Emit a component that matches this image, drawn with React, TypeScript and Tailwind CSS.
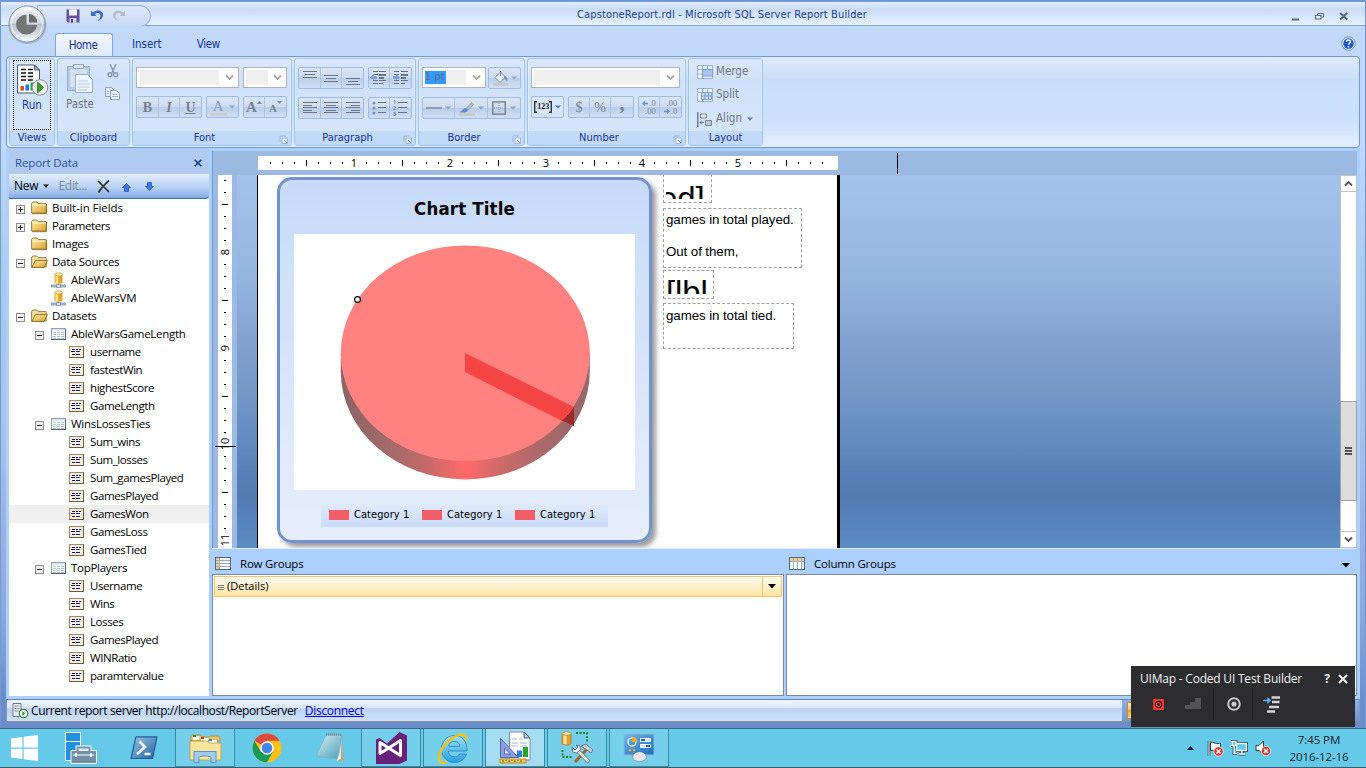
import React from "react";

const tahoma = "font-['DejaVu_Sans_Condensed','DejaVu_Sans',sans-serif] [font-stretch:condensed]";
const segoe = "font-['Open_Sans','Noto_Sans',sans-serif]";

function Caret({ c = "#8ba7d0" }: { c?: string }) {
  return (
    <svg width="6" height="4" viewBox="0 0 6 4" className="shrink-0">
      <path d="M0 0.5h6L3 3.8z" fill={c} />
    </svg>
  );
}

function Chevron({ up = false, c = "#a9a9a9" }: { up?: boolean; c?: string }) {
  return (
    <svg width="9" height="7" viewBox="0 0 9 7" className="shrink-0">
      <path d={up ? "M1 5.5 4.5 2 8 5.5" : "M1 1.5 4.5 5 8 1.5"} fill="none" stroke={c} strokeWidth="1.9" />
    </svg>
  );
}

function Combo({ w, field, children }: { w: string; field: string; children?: React.ReactNode }) {
  return (
    <div className={`flex h-[21px] items-center justify-between border border-[#aeb4bf] bg-white pl-[2px] pr-[4px] ${w}`}>
      <div className={`flex h-[15px] items-center bg-[#efefef] ${field}`}>{children}</div>
      <Chevron />
    </div>
  );
}

function Btns({ children, plain = false }: { children: React.ReactNode; plain?: boolean }) {
  return (
    <div
      className={`flex h-[22px] divide-x divide-[#a9c2e6] rounded-[2px] border border-[#9dbbe6] ${
        plain
          ? "bg-linear-to-b from-[#dbe9fb] to-[#d3e4fb]"
          : "bg-[linear-gradient(180deg,#dae6f5_0%,#cddcf0_48%,#b9cde8_50%,#cfe0f5_100%)]"
      }`}
    >
      {children}
    </div>
  );
}

function B({ w = "w-[22px]", children }: { w?: string; children: React.ReactNode }) {
  return <div className={`flex items-center justify-center ${w}`}>{children}</div>;
}

function Group({ w, label, launcher, children }: { w: string; label: string; launcher?: boolean; children: React.ReactNode }) {
  return (
    <div className={`flex h-[88px] shrink-0 flex-col rounded-[3px] border border-[#9cc0f0] bg-[linear-gradient(180deg,#dbe8fb_0%,#cfe1fa_25%,#d6e7fc_100%)] shadow-[inset_0_0_0_1px_#e0edfd] ${w}`}>
      <div className="h-[72px]">{children}</div>
      <div className={`flex h-[14px] items-center justify-center bg-[#c2d9f8] text-[11px] text-[#15349b] ${tahoma}`}>
        <span className="flex-1 pt-px text-center">{label}</span>
        {launcher && (
          <svg width="9" height="9" viewBox="0 0 9 9" className="mt-[3px] mr-[3px] ml-[3px]">
            <path d="M1 7V1h6" fill="none" stroke="#9db9df" />
            <path d="M3 3h5.5v5.5H3z" fill="#eef5ff" stroke="#9db9df" />
            <path d="M5 5l3 3" stroke="#7d9bc8" />
          </svg>
        )}
      </div>
    </div>
  );
}

function Lines({ rows }: { rows: number[][] }) {
  return (
    <svg width="16" height="16" viewBox="0 0 16 16" shapeRendering="crispEdges">
      {rows.map(([y, x, w]) => (
        <rect key={y} x={x} y={y} width={w} height="1" fill="#6c7684" />
      ))}
    </svg>
  );
}

function Indent({ right = false }: { right?: boolean }) {
  return (
    <svg width="18" height="16" viewBox="0 0 18 16" shapeRendering="crispEdges">
      <g fill="#69727f">
        {[1, 4, 10, 13].map((y) => (
          <rect key={y} x={right ? 2 : 3} y={y} width="5" height="1" />
        ))}
        <rect x="9" y="1" width="7" height="1" />
        <rect x="9" y="4" width="7" height="2" />
        <rect x="9" y="7" width="5" height="2" />
        <rect x="9" y="10" width="7" height="1" />
        <rect x="9" y="13" width="4" height="1" />
      </g>
      <path d={right ? "M1 6h3V4l4 3.5-4 3V9H1z" : "M7 6H4V4L0 7.5l4 3V9h3z"} fill="#7fa0d6" />
    </svg>
  );
}

function FolderIcon({ open = false }: { open?: boolean }) {
  return (
    <svg width="17" height="14" viewBox="0 0 17 14">
      <defs>
        <linearGradient id="fold" x1="0" y1="0" x2="1" y2="1">
          <stop offset="0" stopColor="#fdf0b0" />
          <stop offset="1" stopColor="#dca22c" />
        </linearGradient>
      </defs>
      <path d="M.6 12V2.4L1.8 1h4l1.4 1.6h8V12z" fill={open ? "#f4e09a" : "url(#fold)"} stroke="#8a7440" strokeWidth=".9" />
      {open ? (
        <path d="M.8 12.4 4.4 5.4H16.4L13.2 12.4z" fill="url(#fold)" stroke="#8a6a20" strokeWidth=".9" />
      ) : (
        <>
          <path d="M1.2 4h13.5" stroke="#fff6cf" />
          <path d="M1 12.7h14.5V3" fill="none" stroke="#8d6a1a" strokeWidth=".9" />
        </>
      )}
    </svg>
  );
}

function DbIcon() {
  return (
    <svg width="16" height="16" viewBox="0 0 16 16">
      <path d="M3.5 2.5v8c0 1.6 8 1.6 8 0v-8z" fill="#e4a526" />
      <path d="M4.6 3v8c.8.5 1.6.6 2.6.6V3z" fill="#fbe08a" />
      <ellipse cx="7.5" cy="2.4" rx="4" ry="1.6" fill="#fbe9ae" stroke="#c58d20" strokeWidth=".6" />
      <path d="M7.5 11.8v2" stroke="#55718f" />
      <rect x=".5" y="13" width="5" height="2" fill="#b9cadb" stroke="#63809e" strokeWidth=".7" />
      <rect x="9.5" y="13" width="5" height="2" fill="#b9cadb" stroke="#63809e" strokeWidth=".7" />
      <rect x="5.5" y="12.7" width="4" height="2.6" fill="#dbe6f0" stroke="#63809e" strokeWidth=".7" />
    </svg>
  );
}

function TableIcon() {
  return (
    <svg width="15" height="13" viewBox="0 0 15 13" shapeRendering="crispEdges">
      <rect x=".5" y=".5" width="14" height="11" fill="#f8fbff" stroke="#8c9bb0" />
      <rect x="1" y="1" width="13" height="2" fill="#dfe8f3" />
      {[4, 6, 8, 10].map((y) => (
        <path key={y} d={`M2 ${y}.5h3M6 ${y}.5h3M10 ${y}.5h3`} stroke="#b9c5d3" />
      ))}
      <path d="M0 11.5h15M14.5 1v11" stroke="#4b6182" />
    </svg>
  );
}

function FieldIcon() {
  return (
    <svg width="15" height="12" viewBox="0 0 15 12" shapeRendering="crispEdges">
      <rect x=".5" y=".5" width="14" height="11" fill="#f5f0dd" stroke="#a08c5c" />
      <path d="M0 11.5h15M14.5 0v12" stroke="#6d5a38" />
      <path d="M3 3.5h3M7 3.5h2M10 3.5h2M2 5.5h4M7 5.5h4M3 8.5h3M7 8.5h4" stroke="#17178a" />
    </svg>
  );
}

type Node = { t: string; l: number; k: "f" | "o" | "db" | "tb" | "fd"; e?: "+" | "-" };
const nodes: Node[] = [
  { t: "Built-in Fields", l: 0, k: "f", e: "+" },
  { t: "Parameters", l: 0, k: "f", e: "+" },
  { t: "Images", l: 0, k: "f" },
  { t: "Data Sources", l: 0, k: "o", e: "-" },
  { t: "AbleWars", l: 1, k: "db" },
  { t: "AbleWarsVM", l: 1, k: "db" },
  { t: "Datasets", l: 0, k: "o", e: "-" },
  { t: "AbleWarsGameLength", l: 1, k: "tb", e: "-" },
  { t: "username", l: 2, k: "fd" },
  { t: "fastestWin", l: 2, k: "fd" },
  { t: "highestScore", l: 2, k: "fd" },
  { t: "GameLength", l: 2, k: "fd" },
  { t: "WinsLossesTies", l: 1, k: "tb", e: "-" },
  { t: "Sum_wins", l: 2, k: "fd" },
  { t: "Sum_losses", l: 2, k: "fd" },
  { t: "Sum_gamesPlayed", l: 2, k: "fd" },
  { t: "GamesPlayed", l: 2, k: "fd" },
  { t: "GamesWon", l: 2, k: "fd" },
  { t: "GamesLoss", l: 2, k: "fd" },
  { t: "GamesTied", l: 2, k: "fd" },
  { t: "TopPlayers", l: 1, k: "tb", e: "-" },
  { t: "Username", l: 2, k: "fd" },
  { t: "Wins", l: 2, k: "fd" },
  { t: "Losses", l: 2, k: "fd" },
  { t: "GamesPlayed", l: 2, k: "fd" },
  { t: "WINRatio", l: 2, k: "fd" },
  { t: "paramtervalue", l: 2, k: "fd" },
];
const pads = ["pl-[7px]", "pl-[26px]", "pl-[45px]"];

function TreeRow({ n }: { n: Node }) {
  const tight = n.t === "Built-in Fields" ? "tracking-[-0.05px]" : n.l === 2 || n.t === "Parameters" ? "tracking-[-0.42px]" : "tracking-[-0.28px]";
  return (
    <div className={`flex h-[18px] items-center ${pads[n.l]} ${n.t === "GamesWon" ? "bg-[#efefef]" : ""}`}>
      <div className="flex w-[15px] items-center pt-[3px]">
        {n.e && (
          <svg width="9" height="9" viewBox="0 0 9 9" shapeRendering="crispEdges">
            <rect x=".5" y=".5" width="8" height="8" fill="#f3f3f3" stroke="#8c8c8c" />
            <path d={n.e === "+" ? "M2 4.5h5M4.5 2v5" : "M2 4.5h5"} stroke="#222" />
          </svg>
        )}
      </div>
      <div className={n.l === 1 ? "w-[21px] pl-px" : "w-[21px]"}>
        {n.k === "f" && <FolderIcon />}
        {n.k === "o" && <FolderIcon open />}
        {n.k === "db" && <DbIcon />}
        {n.k === "tb" && <TableIcon />}
        {n.k === "fd" && <FieldIcon />}
      </div>
      <span className={`whitespace-nowrap text-[11.5px] leading-[18px] text-black ${tight} ${segoe}`}>{n.t}</span>
    </div>
  );
}

function TitleBar() {
  return (
    <div className="flex h-[26px] shrink-0 items-start border-t-2 border-b border-t-[#6e9ad8] border-b-[#7fa3dc] bg-[linear-gradient(180deg,#e4edfc_0%,#c9dcf8_30%,#cfe0f9_45%,#e6f1fe_100%)]">
      <div className="ml-[36px] mt-[3px] flex h-[22px] w-[114px] items-center rounded-r-[11px] border border-[#8fb0e2] bg-[linear-gradient(180deg,#dfe9fa,#c6d9f6)] pl-[28px]">
        <svg width="14" height="14" viewBox="0 0 14 14">
          <path d="M.5.5h13v13H2l-1.500-1.500z" fill="#5f4fa8" />
          <path d="M3 .5h8v6H3z" fill="#f2f2fa" />
          <path d="M3.500 9h7v4.500h-7z" fill="#d8d8ec" />
          <path d="M5 10h2v3.500H5z" fill="#4a3a90" />
        </svg>
        <svg width="14" height="14" viewBox="0 0 14 14" className="ml-[10px]">
          <path d="M1 1.500v5.500h5.500L4.700 5.200C7 3 10.500 3.700 10.500 6.800c0 2.200-1.500 4-3.500 5.200 3.500-.7 6-3 6-6C13 1.500 7 0 3 3.500z" fill="#3569c8" />
        </svg>
        <svg width="14" height="14" viewBox="0 0 14 14" className="ml-[8px]">
          <path d="M13 1.500v5.500H7.500l1.800-1.800C7 3 3.500 3.700 3.500 6.800c0 2.200 1.500 4 3.500 5.200C3.500 11.300 1 9 1 6 1 1.500 7 0 11 3.500z" fill="#b4bcc8" />
        </svg>
      </div>
      <span className={`ml-[426px] mt-[5px] whitespace-nowrap text-[11px] leading-[16px] tracking-[0.13px] text-[#1c3f94] ${tahoma}`}>
        CapstoneReport.rdl - Microsoft SQL Server Report Builder
      </span>
      <div className="ml-auto mt-[9px] mr-[16px] flex items-end gap-[15px]">
        <svg width="8" height="12" viewBox="0 0 8 12"><path d="M0 8.500h7" stroke="#566884" strokeWidth="2" /></svg>
        <svg width="9" height="12" viewBox="0 0 9 12">
          <path d="M2.500 4V2.500h6V6H7" fill="none" stroke="#566884" />
          <path d="M.5 4.500h5.500V8H.5z" fill="#eef4fd" stroke="#566884" strokeWidth="1.200" />
        </svg>
        <svg width="10" height="12" viewBox="0 0 10 12"><path d="M1.200 2l7 6.500M8.200 2l-7 6.500" stroke="#566884" strokeWidth="2.100" /></svg>
      </div>
    </div>
  );
}

function Tabs() {
  return (
    <div className={`flex h-[30px] shrink-0 items-end bg-[#c1d8f8] text-[11.500px] text-[#15349b] ${tahoma}`}>
      <div className="ml-[54px] flex h-[23px] w-[58px] items-center justify-center rounded-t-[3px] border border-b-0 border-[#7fa3dc] bg-[linear-gradient(180deg,#f2f7fe,#dde9fb)] pt-px pr-[2px] tracking-[-0.5px]">Home</div>
      <div className="ml-[19px] flex h-[23px] items-center pt-px">Insert</div>
      <div className="ml-[35px] flex h-[23px] items-center pt-px tracking-[-0.3px]">View</div>
      <svg width="15" height="15" viewBox="0 0 15 15" className="mb-[5px] ml-auto mr-[9px]">
        <circle cx="7.500" cy="7.500" r="6.800" fill="#dce8fa" stroke="#6f93cf" />
        <circle cx="7.500" cy="7.500" r="5.200" fill="#1f5bc8" />
        <path d="M5.500 6c0-2.600 4-2.600 4-.3 0 1.500-2 1.500-2 3M7.500 10v1.500" fill="none" stroke="#fff" strokeWidth="1.400" />
      </svg>
    </div>
  );
}

function Orb() {
  return (
    <svg width="40" height="42" viewBox="0 0 40 42" className="absolute left-[6px] top-[4px]">
      <defs>
        <linearGradient id="orb" x1="0" y1="0" x2="0" y2="1">
          <stop offset="0" stopColor="#f7f8fa" />
          <stop offset=".48" stopColor="#cfd5dd" />
          <stop offset=".5" stopColor="#b3bcc9" />
          <stop offset="1" stopColor="#f4f7fb" />
        </linearGradient>
      </defs>
      <circle cx="20.500" cy="21" r="19" fill="#5d6f8e" opacity=".35" />
      <circle cx="20" cy="20" r="18" fill="url(#orb)" stroke="#8d99ab" />
      <circle cx="20" cy="20" r="15.500" fill="none" stroke="#fff" strokeOpacity=".7" />
      <path d="M19.500 10.500v10.500H30A10.500 10 0 1 1 19.500 10.500z" fill="#747474" />
      <path d="M21.500 9.500a9.500 9.500 0 0 1 9.500 9.500h-9.500z" fill="#6a6a6a" stroke="#eee" strokeWidth=".8" />
    </svg>
  );
}

function Ribbon() {
  const txt = `text-[11.500px] text-[#74777c] ${tahoma}`;
  return (
    <div className="flex h-[92px] shrink-0 bg-[#c1d8f8] pr-[5px] pl-[5px]">
      <div className="flex h-[92px] flex-1 gap-[2px] rounded-[4px] border border-[#6d97d8] bg-[linear-gradient(180deg,#dfeafc_0%,#c9dff9_25%,#cde1fb_70%,#e3effe_100%)] pt-[1px] pl-[2px]">
        <Group w="w-[46px]" label="Views">
          <div className="mx-auto mt-[1px] flex h-[70px] w-[38px] flex-col items-center border border-dotted border-black pt-[3px]">
            <svg width="33" height="32" viewBox="0 0 33 32">
              <path d="M1.500 1h17l5 5v23h-22z" fill="#fff" stroke="#445a78" />
              <path d="M18.500 1v5h5z" fill="#aebccd" stroke="#445a78" />
              <path d="M5 5.500h5M12 5.500h5M5 9h5M12 9h5M5 12.500h5M12 12.500h5M5 16h5M12 16h5" stroke="#111" strokeWidth="1.700" />
              <path d="M4.500 22h3.500v4.500H4.500z" fill="#e8491c" />
              <path d="M9.500 20.500h3.500v6H9.500z" fill="#1679e0" />
              <path d="M14.500 18.500H18v8h-3.500z" fill="#19a22c" />
              <circle cx="24" cy="23.500" r="7.800" fill="#eef0f2" stroke="#8b9099" />
              <path d="M21.500 18l6 5.500-6 5.500z" fill="#3aa52a" stroke="#1c6e18" strokeWidth=".8" />
            </svg>
            <span className={`mt-[1px] text-[11.500px] leading-[16px] text-[#15349b] ${tahoma}`}>Run</span>
          </div>
        </Group>
        <Group w="w-[73px]" label="Clipboard">
          <div className="flex">
            <div className="ml-[7px] mt-[4px] flex w-[30px] flex-col items-center">
              <svg width="28" height="31" viewBox="0 0 28 31">
                <path d="M1.500 3.500h22v24h-22z" fill="#b9cbe4" stroke="#94aaca" />
                <path d="M4 6h17v18H4z" fill="#d3e0f1" />
                <path d="M7.500 1.500h10v4h-10z" fill="#dbe4ef" stroke="#94a5be" />
                <path d="M9.500 11.500h12l5 5v13h-17z" fill="#eff5fd" stroke="#98aed0" />
                <path d="M12 18h10M12 21h12M12 24h12M12 27h9" stroke="#b5c7e0" />
              </svg>
              <span className={`mt-[2px] leading-[16px] ${txt}`}>Paste</span>
            </div>
            <div className="ml-[10px] mt-[5px] flex flex-col items-center gap-[9px]">
              <svg width="12" height="14" viewBox="0 0 12 14">
                <path d="M3 0l4 9M9 0L5 9" stroke="#8e9cb2" strokeWidth="1.500" />
                <circle cx="3" cy="10.800" r="2" fill="none" stroke="#8798b4" strokeWidth="1.400" />
                <circle cx="8.700" cy="10.800" r="2" fill="none" stroke="#8798b4" strokeWidth="1.400" />
              </svg>
              <svg width="15" height="13" viewBox="0 0 15 13">
                <path d="M.5.500h6l3 3V9.500h-9z" fill="#e2ebf8" stroke="#8ea2c2" />
                <path d="M5.500 3.500h6l3 3v6h-9z" fill="#eef4fc" stroke="#8ea2c2" />
                <path d="M7 7.500h5M7 9.500h6M2 4.500h2M2 6.500h2" stroke="#9fb3d0" />
              </svg>
            </div>
          </div>
        </Group>
        <Group w="w-[160px]" label="Font" launcher>
          <div className="flex flex-col gap-[8px] pt-[8px] pl-[3px]">
            <div className="flex gap-[4px]">
              <Combo w="w-[103px]" field="w-[80px]" />
              <Combo w="w-[44px]" field="w-[22px]" />
            </div>
            <div className="flex font-['Liberation_Serif',serif] text-[14px] text-[#74808f]">
              <Btns>
                <B><b>B</b></B>
                <B w="w-[21px]"><b><i>I</i></b></B>
                <B w="w-[21px]"><b className="underline">U</b></B>
              </Btns>
              <div className="ml-[4px]">
                <Btns>
                  <div className="flex w-[31px] items-center justify-evenly">
                    <span className="border-b-[3px] border-[#c9ccd0] px-[3px] text-[15px] leading-[14px] text-[#7c98c8]">A</span>
                    <Caret />
                  </div>
                </Btns>
              </div>
              <div className="ml-[4px]">
                <Btns>
                  <B w="w-[21px]"><b className="text-[15px]">A</b><span className="self-start pt-[4px]"><svg width="5" height="3"><path d="M0 3h5L2.500 0z" fill="#6f8fc4" /></svg></span></B>
                  <B w="w-[21px]"><b className="pt-[3px] text-[11px]">A</b><span className="self-start pt-[4px]"><svg width="5" height="3"><path d="M0 0h5L2.500 3z" fill="#6f8fc4" /></svg></span></B>
                </Btns>
              </div>
            </div>
          </div>
        </Group>
        <Group w="w-[122px]" label="Paragraph" launcher>
          <div className="flex flex-col gap-[8px] pt-[8px] pl-[3px]">
            <div className="flex gap-[4px]">
              <Btns>
                <B><Lines rows={[[1, 1, 14], [4, 3, 10], [7, 1, 14]]} /></B>
                <B w="w-[21px]"><Lines rows={[[5, 1, 14], [8, 3, 10], [11, 1, 14]]} /></B>
                <B w="w-[21px]"><Lines rows={[[8, 1, 14], [11, 3, 10], [14, 1, 14]]} /></B>
              </Btns>
              <Btns>
                <B w="w-[21px]"><Indent /></B>
                <B w="w-[21px]"><Indent right /></B>
              </Btns>
            </div>
            <div className="flex gap-[4px]">
              <Btns>
                <B><Lines rows={[[2, 1, 14], [5, 1, 9], [7, 1, 14], [10, 1, 9], [12, 1, 14]]} /></B>
                <B w="w-[21px]"><Lines rows={[[2, 1, 14], [5, 3, 10], [7, 1, 14], [10, 3, 10], [12, 1, 14]]} /></B>
                <B w="w-[21px]"><Lines rows={[[2, 1, 14], [5, 6, 9], [7, 1, 14], [10, 6, 9], [12, 1, 14]]} /></B>
              </Btns>
              <Btns>
                <B w="w-[21px]">
                  <svg width="16" height="16" viewBox="0 0 16 16">
                    {[3, 8, 13].map((y) => (
                      <g key={y}><circle cx="3" cy={y} r="1.500" fill="#7390c4" /><path d={`M7 ${y - 0.5}h8`} stroke="#6c7684" /></g>
                    ))}
                  </svg>
                </B>
                <B w="w-[21px]">
                  <div className="flex items-center">
                    <div className="flex flex-col text-[5.500px] font-bold leading-[6px] text-[#6c8cc6]"><span>1</span><span>2</span><span>3</span></div>
                    <svg width="11" height="16" viewBox="0 0 11 16" className="ml-[1px]"><path d="M1 2.500h9M1 7.500h9M1 12.500h9" stroke="#6c7684" /></svg>
                  </div>
                </B>
              </Btns>
            </div>
          </div>
        </Group>
        <Group w="w-[107px]" label="Border" launcher>
          <div className="flex flex-col gap-[8px] pt-[8px] pl-[3px]">
            <div className="flex gap-[2px]">
              <Combo w="w-[64px]" field="w-[41px]">
                <span className={`flex h-[13px] items-center bg-[#3399ff] pr-[1px] text-[11px] whitespace-nowrap text-[#5f6f86] ${tahoma}`}>1 pt</span>
              </Combo>
              <Btns>
                <div className="flex w-[31px] items-center justify-evenly">
                  <svg width="17" height="17" viewBox="0 0 17 17">
                    <path d="M1 13h15v3H1z" fill="#c9c9c9" />
                    <path d="M3 7.500 8.500 2l5 5-5.500 5.500z" fill="#e7edf5" stroke="#7b8ba5" />
                    <path d="M8.500 1v5" stroke="#7b8ba5" />
                    <path d="M12 6c3 0 4 3 3 6-.5-2-2-3-3-4z" fill="#6d8fc9" />
                  </svg>
                  <Caret />
                </div>
              </Btns>
            </div>
            <div className="flex">
              <Btns>
                <div className="flex w-[32px] items-center justify-evenly"><svg width="16" height="2"><path d="M0 1h16" stroke="#6c7684" strokeWidth="1.200" /></svg><Caret /></div>
                <div className="flex w-[33px] items-center justify-evenly">
                  <svg width="18" height="17" viewBox="0 0 18 17">
                    <path d="M1 13h16v3H1z" fill="#c9c9c9" />
                    <path d="M1 12c3 0 4-4 7-4l2 2c-1 3-5 3-9 2z" fill="#5f88cc" />
                    <path d="M8.500 8 14 2l2 2-5.500 6z" fill="#a9bbd6" stroke="#7b8ba5" strokeWidth=".6" />
                    <path d="M13.500 2 16 1l1 1-1.500 2z" fill="#ece3b4" />
                  </svg>
                  <Caret />
                </div>
                <div className="flex w-[32px] items-center justify-evenly">
                  <svg width="14" height="14" viewBox="0 0 14 14"><path d="M.8.800h12.400v12.400H.8z" fill="none" stroke="#6c7684" strokeWidth="1.300" /><path d="M7 2v10M2 7h10" stroke="#8b95a5" strokeDasharray="1 1" /></svg>
                  <Caret />
                </div>
              </Btns>
            </div>
          </div>
        </Group>
        <Group w="w-[159px]" label="Number" launcher>
          <div className="flex flex-col gap-[8px] pt-[8px] pl-[3px]">
            <Combo w="w-[149px]" field="w-[126px]" />
            <div className="flex font-['Liberation_Serif',serif] text-[#74808f]">
              <Btns plain>
                <div className="flex w-[31px] items-center justify-evenly text-[#222]">
                  <span className="flex items-center">
                    <svg width="3" height="12" viewBox="0 0 3 12"><path d="M3 .7H.7v10.600H3" fill="none" stroke="#333" strokeWidth="1.400" /></svg>
                    <span className="text-[8px] font-bold leading-none">123</span>
                    <svg width="3" height="12" viewBox="0 0 3 12"><path d="M0 .7h2.300v10.600H0" fill="none" stroke="#333" strokeWidth="1.400" /></svg>
                  </span>
                  <Caret c="#4f7fc4" />
                </div>
              </Btns>
              <div className="ml-[4px]">
                <Btns>
                  <B w="w-[21px]"><span className="text-[14px]">$</span></B>
                  <B w="w-[21px]"><span className="text-[14px]">%</span></B>
                  <B><b className="pb-[8px] text-[20px] leading-none">,</b></B>
                </Btns>
              </div>
              <div className="ml-[4px]">
                <Btns>
                  <B w="w-[21px]">
                    <span className="flex flex-col items-end text-[8.500px] leading-[8px]">
                      <span className="flex items-center gap-px"><svg width="6" height="5" viewBox="0 0 6 5"><path d="M6 2.500H1.500M3 .500l-2 2 2 2" fill="none" stroke="#6a8fd0" strokeWidth="1.400" /></svg>.0</span>
                      <span>.00</span>
                    </span>
                  </B>
                  <B w="w-[21px]">
                    <span className="flex flex-col items-end text-[8.500px] leading-[8px]">
                      <span>.00</span>
                      <span className="flex items-center gap-px"><svg width="6" height="5" viewBox="0 0 6 5"><path d="M0 2.500h4.500M3 .500l2 2-2 2" fill="none" stroke="#6a8fd0" strokeWidth="1.400" /></svg>.0</span>
                    </span>
                  </B>
                </Btns>
              </div>
            </div>
          </div>
        </Group>
        <Group w="w-[75px]" label="Layout">
          <div className={`flex flex-col pl-[8px] pt-[1px] ${txt}`}>
            <div className="flex h-[23px] items-center gap-[3px]">
              <svg width="16" height="14" viewBox="0 0 16 14"><path d="M.5.500h15v13H.5zM.5 4.500h15M5.500.500v13M10.500.500v4M.5 9h5" fill="#eaf1fb" stroke="#9ab0d2" /><path d="M5.500 4.500h10v6.500h-10z" fill="#a9c4ee" stroke="#7d9fd6" /></svg>
              Merge
            </div>
            <div className="flex h-[24px] items-center gap-[3px]">
              <svg width="16" height="14" viewBox="0 0 16 14"><path d="M.5.500h15v13H.5zM.5 4.500h15M5.500.500v13M10.500.500v4" fill="#eaf1fb" stroke="#9ab0d2" /><path d="M4.500 4.500h10v7h-10zM4.500 8h10M8 4.500v7M11.500 4.500v7" fill="#c5d8f4" stroke="#7d9fd6" /></svg>
              Split
            </div>
            <div className="flex h-[24px] items-center gap-[3px]">
              <svg width="16" height="15" viewBox="0 0 16 15"><path d="M.8 0v15" stroke="#6d7682" strokeWidth="1.400" /><path d="M3.500 2h6v4h-6z" fill="#e8edf4" stroke="#7b8492" /><path d="M8.500 8.500h6v5h-6z" fill="#c0c8d3" stroke="#7b8492" /><path d="M3 10.500h4M5 8.500l-2 2 2 2" fill="none" stroke="#5d7bb0" /></svg>
              Align
              <span className="ml-[2px] flex"><Caret c="#4f7fc4" /></span>
            </div>
          </div>
        </Group>
      </div>
    </div>
  );
}

function ReportData() {
  return (
    <div className="flex w-[200px] shrink-0 flex-col">
      <div className={`flex h-[25px] shrink-0 items-center justify-between bg-[#b0cbef] pl-[6px] pr-[7px] pt-[2px] text-[11.500px] tracking-[-0.15px] text-[#2b50a8] ${segoe}`}>
        <span>Report Data</span>
        <svg width="8" height="8" viewBox="0 0 8 8"><path d="M.7.700l6.600 6.600M7.300.700.7 7.300" stroke="#16398c" strokeWidth="1.600" /></svg>
      </div>
      <div className={`flex h-[25px] shrink-0 items-center rounded-br-[4px] border-b border-[#3b6bb8] bg-[linear-gradient(180deg,#e2edfd_0%,#bdd5f7_50%,#85abe4_100%)] pl-[5px] text-[12px] ${segoe}`}>
        <span className="tracking-[-0.2px]">New</span>
        <span className="ml-[5px] flex"><Caret c="#000" /></span>
        <span className="ml-[9px] tracking-[-0.3px] text-[#7c8798]">Edit...</span>
        <svg width="13" height="13" viewBox="0 0 13 13" className="ml-[10px]"><path d="M1 1c3 3 8 8 11 11M12 .500C8 4 4 8 1.500 12.500" fill="none" stroke="#2f3338" strokeWidth="1.700" /></svg>
        <svg width="9" height="9" viewBox="0 0 9 9" className="ml-[12px] mt-[2px]"><path d="M4.500.500 8.500 4.500H6.500V8.500h-4v-4H.500z" fill="#3f78e6" stroke="#2450b0" strokeWidth=".7" /></svg>
        <svg width="9" height="9" viewBox="0 0 9 9" className="ml-[14px]"><path d="M4.500 8.500.500 4.500h2v-4h4v4h2z" fill="#3f78e6" stroke="#2450b0" strokeWidth=".7" /></svg>
      </div>
      <div className="h-[497px] bg-white">
        {nodes.map((n, i) => (
          <TreeRow key={i} n={n} />
        ))}
      </div>
    </div>
  );
}

function HRuler() {
  return (
    <div className="flex h-[24px] shrink-0 bg-[#9bb9e1] pl-[45px] pt-[5px]">
      <div className={`flex h-[14px] w-[580px] items-center overflow-hidden bg-white pl-[6px] text-[11px] ${segoe}`}>
        {Array.from({ length: 47 }, (_, i) => i + 1).map((i) => (
          <div key={i} className="flex w-[12px] shrink-0 justify-center">
            {i % 8 === 0 ? <span>{i / 8}</span> : i % 4 === 0 ? <div className="h-[6px] w-px bg-black" /> : <div className="h-[2px] w-px bg-black" />}
          </div>
        ))}
      </div>
      <div className="-mt-[3px] ml-[59px] h-[21px] w-px bg-black" />
    </div>
  );
}

function VRuler() {
  return (
    <div className="relative h-[373px] w-[24px] shrink-0 overflow-hidden bg-[#9bb9e1] pl-[5px]">
      <div className={`-mt-px flex w-[14px] flex-col items-center bg-white text-[11px] ${segoe}`}>
        {Array.from({ length: 32 }, (_, i) => i + 2).map((i) => (
          <div key={i} className="flex h-[12px] shrink-0 items-center justify-center">
            {i % 8 === 0 ? <span className="-rotate-90 leading-[12px]">{i / 8 + 7}</span> : i % 4 === 0 ? <div className="h-px w-[6px] bg-black" /> : <div className="h-px w-[2px] bg-black" />}
          </div>
        ))}
      </div>
      <div className="absolute left-[2px] top-[271px] h-px w-[21px] bg-black" />
    </div>
  );
}

function Pie() {
  return (
    <svg width="341" height="256" viewBox="294 234 341 256" className="block shrink-0 bg-white">
      <defs>
        <linearGradient id="side" x1="0" x2="1">
          <stop offset="0" stopColor="#8a6464" />
          <stop offset=".2" stopColor="#a46a6a" />
          <stop offset=".36" stopColor="#c96a69" />
          <stop offset=".5" stopColor="#ff6a69" />
          <stop offset=".64" stopColor="#cd6b6a" />
          <stop offset=".8" stopColor="#ac6868" />
          <stop offset="1" stopColor="#936868" />
        </linearGradient>
      </defs>
      <path d="M340.800 353v18.500a124.500 108 0 0 0 249 0V353z" fill="url(#side)" />
      <ellipse cx="465.300" cy="353.300" rx="124.500" ry="107.800" fill="#ff8280" />
      <path d="M465 353l109 54-12 14L465 372z" fill="#f54444" />
      <path d="M574 407v19l-12-5.500c5-4.500 9-9 12-13.500z" fill="#9c282b" />
      <circle cx="357.500" cy="299.500" r="2.900" fill="#fff" stroke="#000" strokeWidth="1.200" />
    </svg>
  );
}

function Box({ pos, children }: { pos: string; children: React.ReactNode }) {
  return <div className={`absolute overflow-hidden border border-dashed border-[#a0a0a0] font-['Liberation_Sans',Arial,sans-serif] text-[13.330px] leading-[16px] tracking-[-0.090px] text-black ${pos}`}>{children}</div>;
}

function Canvas() {
  return (
    <div className="flex h-[373px] flex-1 overflow-hidden bg-[linear-gradient(180deg,#a3c2eb_0%,#97b7e3_25%,#809fce_47%,#688fc2_68%,#5279b0_86%,#5680b8_90%,#5b8cc3_100%)] pl-[20px]">
      <div className="relative h-[373px] w-[583px] border-l border-r-[3px] border-black bg-white">
        <div className="absolute left-[19px] top-[2px] flex h-[366px] w-[375px] flex-col items-center rounded-[15px] border-[3px] border-[#7092cd] bg-[linear-gradient(180deg,#c7d9f8_0%,#cadef9_15%,#cfe3f6_25%,#d4e2f9_42%,#e0eafc_75%,#e5edfd_100%)] shadow-[4px_4px_5px_rgba(0,0,0,0.4)]">
          <div className={`mt-[14px] h-[40px] shrink-0 text-[18.500px] font-bold leading-[29px] tracking-[0.15px] text-black ${tahoma}`}>Chart Title</div>
          <Pie />
          <div className={`mt-[13px] flex h-[24px] w-[287px] shrink-0 items-center bg-linear-to-b from-[#e2ebfc] to-[#c9dbf8] pl-[8px] text-[11px] tracking-[0.070px] ${tahoma}`}>
            {[0, 1, 2].map((i) => (
              <div key={i} className="flex w-[93px] shrink-0 items-center whitespace-nowrap">
                <div className="mr-[5px] h-[10px] w-[20px] bg-[#f05f68]" />
                <span className="pt-px">Category 1</span>
              </div>
            ))}
          </div>
        </div>
        <Box pos="left-[405px] -top-[1px] h-[29px] w-[49px]">
          <div className="ml-[2px] mt-[3px] h-[21px] w-[44px] overflow-hidden">
            <div className="-ml-[7px] mt-[2px] whitespace-nowrap text-[33px] leading-[38px]">ed]</div>
          </div>
        </Box>
        <Box pos="left-[405px] top-[33px] h-[60px] w-[139px] pl-[2px] pt-[3px]">
          <p>games in total played.</p>
          <p className="mt-[16px]">Out of them,</p>
        </Box>
        <Box pos="left-[405px] top-[95px] h-[29px] w-[51px]">
          <div className="ml-[2px] mt-[3px] h-[20px] w-[44px] overflow-hidden">
            <div className="whitespace-nowrap text-[33px] leading-[38px]">[lbl</div>
          </div>
        </Box>
        <Box pos="left-[405px] top-[128px] h-[46px] w-[131px] pl-[2px] pt-[4px]">games in total tied.</Box>
      </div>
    </div>
  );
}

function Scrollbar() {
  return (
    <div className="flex h-[373px] w-[17px] shrink-0 flex-col border border-[#c0c0c0] bg-white">
      <div className="flex h-[16px] shrink-0 items-center justify-center border-b border-[#c0c0c0]"><Chevron up c="#555" /></div>
      <div className="h-[209px]" />
      <div className="-mx-px flex h-[100px] flex-col items-center justify-center gap-px border border-[#a0a0a0] bg-[#dcdcdc]">
        <div className="h-[2px] w-[7px] bg-[#555]" />
        <div className="h-[2px] w-[7px] bg-[#555]" />
        <div className="h-[2px] w-[7px] bg-[#555]" />
      </div>
      <div className="flex-1" />
      <div className="flex h-[16px] shrink-0 items-center justify-center border-t border-[#c0c0c0]"><Chevron c="#555" /></div>
    </div>
  );
}

function Groups() {
  return (
    <div className={`text-[11.500px] text-black ${segoe}`}>
      <div className="flex h-[26px] items-center border-t border-[#e3eefc] pt-[4px] tracking-[-0.2px]">
        <div className="flex w-[574px] items-center">
          <svg width="16" height="13" viewBox="0 0 16 13" className="ml-[3px]" shapeRendering="crispEdges">
            <path d="M.5.500h15v12H.5z" fill="#f6f9fd" stroke="#53657f" />
            <path d="M1 1h3v11H1z" fill="#e9cf8b" />
            <path d="M4.500 1v11M1 3.500h14M1 6.500h14M1 9.500h14" stroke="#a0acbc" />
          </svg>
          <span className="ml-[9px]">Row Groups</span>
        </div>
        <svg width="16" height="13" viewBox="0 0 16 13" className="ml-[3px]" shapeRendering="crispEdges">
          <path d="M.5.500h15v12H.5z" fill="#f6f9fd" stroke="#53657f" />
          <path d="M1 1h14v3H1z" fill="#e9cf8b" />
          <path d="M1 4.500h14M4.500 1v11M8.500 1v11M12.500 1v11" stroke="#a0acbc" />
        </svg>
        <span className="ml-[9px]">Column Groups</span>
        <svg width="8" height="5" viewBox="0 0 8 5" className="ml-auto mr-[7px] mt-[3px]"><path d="M0 0h8L4 4.500z" fill="#000" /></svg>
      </div>
      <div className="flex gap-[2px]">
        <div className="h-[122px] w-[572px] border border-[#7f8894] bg-white p-px">
          <div className="flex h-[21px] items-center border border-[#fcc268] bg-linear-to-b from-[#fffdf5] to-[#ffe3a0] pl-[3px]">
            <svg width="6" height="6" viewBox="0 0 6 6" className="mt-[2px]" shapeRendering="crispEdges"><path d="M0 .5h6M0 2.500h6M0 4.500h6" stroke="#777" /></svg>
            <span className={`ml-[3px] text-[11px] ${segoe}`}>(Details)</span>
            <div className="ml-auto flex h-full w-[19px] items-center justify-center border-l border-[#fcc268]">
              <svg width="8" height="5" viewBox="0 0 8 5"><path d="M0 0h8L4 4.500z" fill="#000" /></svg>
            </div>
          </div>
        </div>
        <div className="h-[122px] flex-1 border border-[#7f8894] bg-white" />
      </div>
    </div>
  );
}

function Status() {
  return (
    <div className="flex h-[29px] shrink-0 flex-col bg-[#6b8ecb] pl-[5px] pr-[5px]">
      <div className={`flex h-[23px] items-center border border-t-[#6384b8] border-x-[#8596b0] border-b-[#8a8f99] bg-[linear-gradient(180deg,#f0f6ff_0%,#dae8fb_35%,#bcd3f3_42%,#cfe1f8_100%)] text-[12px] ${segoe}`}>
        <svg width="17" height="17" viewBox="0 0 17 17" className="ml-[5px]">
          <path d="M1 1.500h8v13H1z" fill="#e9edf2" stroke="#6c7d92" />
          <path d="M2.500 4h5M2.500 6.500h5M2.500 9h4" stroke="#8c9aab" />
          <circle cx="11.500" cy="11.500" r="4.200" fill="#fff" stroke="#4a8a45" strokeWidth="1.300" />
          <path d="M10.300 9.300v4.400l3.400-2.200z" fill="#2c9a28" />
        </svg>
        <span className="ml-[2px] whitespace-nowrap tracking-[-0.385px]">Current report server http://localhost/ReportServer</span>
        <span className="ml-[7px] tracking-[-0.3px] text-[#0000ee] underline">Disconnect</span>
        <div className="ml-auto flex h-full w-[237px] items-center bg-[linear-gradient(180deg,#8fb0e6,#6f95d4)] pl-[5px]">
          <div className="h-[17px] w-[60px] border border-[#c98a2c] bg-[linear-gradient(180deg,#fff0c8_0%,#fcbf55_45%,#f9a02c_50%,#fdd678_100%)]" />
        </div>
      </div>
    </div>
  );
}

function Task({ w, on, active, children }: { w: string; on?: boolean; active?: boolean; children: React.ReactNode }) {
  return (
    <div className={`flex h-full shrink-0 items-center justify-center ${w} ${on ? "border border-t-0 border-[#3b8aa6]" : ""} ${active ? "bg-[#a4dcf1]" : on ? "bg-[#76cfea]" : ""}`}>
      {children}
    </div>
  );
}

function Taskbar() {
  return (
    <div className="flex h-[40px] shrink-0 items-stretch border-y border-t-[#3e6a86] border-b-[#3f5a6a] bg-[#65c9ea]">
      <Task w="w-[49px]">
        <svg width="27" height="26" viewBox="0 0 27 26"><path d="M0 3.500 11.500 2v10.500H0zM12.700 1.800 27 0v12.500H12.700zM0 13.700h11.500V24L0 22.500zM12.700 13.700H27V26l-14.300-1.800z" fill="#fff" /></svg>
      </Task>
      <Task w="w-[63px]">
        <svg width="32" height="32" viewBox="0 0 32 32">
          <path d="M.5.500h15v28H.5z" fill="#1e90dc" stroke="#fff" />
          <path d="M1 9.500h14" stroke="#fff" />
          <path d="M12.500 19v-3.500h12V19" fill="none" stroke="#fff" strokeWidth="4" />
          <path d="M6 18.500h25.500v13H6z" fill="#7291a8" stroke="#fff" />
          <path d="M12.500 19v-3.500h12V19" fill="none" stroke="#7291a8" strokeWidth="2" />
          <path d="M8 23h21" stroke="#fff" /><path d="M11 21v4M26 21v4" stroke="#fff" strokeWidth="2" />
        </svg>
      </Task>
      <Task w="w-[63px]">
        <svg width="28" height="24" viewBox="0 0 28 24">
          <defs><linearGradient id="ps" x1="0" y1="0" x2="1" y2="1"><stop offset="0" stopColor="#9ac8ea" /><stop offset="1" stopColor="#1f5f9f" /></linearGradient></defs>
          <path d="M6 .8h21L22.500 22.500H1z" fill="url(#ps)" stroke="#225d92" strokeWidth="1.200" />
          <path d="M9.500 5.500 15 11 7 18M14.500 18h6" fill="none" stroke="#fff" strokeWidth="2.600" />
        </svg>
      </Task>
      <Task w="w-[60px]" on>
        <svg width="33" height="30" viewBox="0 0 33 30">
          <path d="M2 3.500 3.500 2h8l1.500 2h7l1-1h9l1 2v3H2z" fill="#e6c665" stroke="#a88634" strokeWidth=".8" />
          <path d="M4 3h6v4H4z" fill="#fff" /><path d="M4 2h3v2H4z" fill="#14a02c" />
          <path d="M12 5h7v3h-7z" fill="#fff" /><path d="M12 4h3v2h-3z" fill="#d53020" />
          <path d="M20 7h8v3h-8z" fill="#fff" /><path d="M20 6h3v2h-3z" fill="#2a8be0" />
          <path d="M1 8h17l3 2h11v17H1z" fill="#f8e49a" stroke="#b9963e" strokeWidth=".8" />
          <path d="M5 29.500V18.500h22v11h-5v-5c0-2-12-2-12 0v5z" fill="#9fcbec" stroke="#5d95c8" />
        </svg>
      </Task>
      <Task w="w-[64px]">
        <svg width="30" height="30" viewBox="0 0 30 30">
          <circle cx="15" cy="15" r="14.500" fill="#fbc116" />
          <path d="M15 15 2.400 7.800A14.500 14.500 0 0 1 27.600 7.800H15z" fill="#dd4a3d" />
          <path d="M2.400 7.800A14.500 14.500 0 0 0 15 29.500L21 18.500 15 15 8.800 18.500z" fill="#199b58" />
          <circle cx="15" cy="15" r="6.800" fill="#fff" /><circle cx="15" cy="15" r="5.300" fill="#4285e8" />
        </svg>
      </Task>
      <Task w="w-[62px]">
        <svg width="31" height="30" viewBox="0 0 31 30">
          <defs><linearGradient id="np" x1="0" y1="0" x2="1" y2="1"><stop offset="0" stopColor="#d7f1f8" /><stop offset="1" stopColor="#4b9ab5" /></linearGradient></defs>
          <path d="M26 3l3 24-5 2z" fill="#c9a86e" />
          <path d="M11 2h16l-5 24-21-3z" fill="url(#np)" stroke="#79adbd" strokeWidth=".7" />
          <path d="M27 2l-1 24-5 3 3-8z" fill="#eef6f8" stroke="#8da5ad" strokeWidth=".6" />
          <path d="M11 1.500h16" stroke="#7a8a92" strokeWidth="2.500" strokeDasharray="1 1" />
        </svg>
      </Task>
      <div className="flex gap-[2px]">
        <Task w="w-[60px]" on>
          <svg width="31" height="32" viewBox="0 0 31 32">
            <path d="M0 7.500 3.500 6 11 11.500 23.500 0 31 3.500v25L23.500 32H0z" fill="#68217a" />
            <path d="M4 11v10l5-5zM24 9.500 15.500 16l8.500 6.500z" fill="#68217a" />
            <path d="M4 10.500 24.500 23.500V8.500L4 21.500z" fill="none" stroke="#fff" strokeWidth="3" strokeLinejoin="round" />
          </svg>
        </Task>
        <Task w="w-[60px]" on>
          <svg width="32" height="32" viewBox="0 0 32 32">
            <defs><linearGradient id="ie" x1="0" y1="0" x2="0" y2="1"><stop offset="0" stopColor="#9fe0fb" /><stop offset="1" stopColor="#2a9fe0" /></linearGradient></defs>
            <path d="M17.500 3.500C9.500 3.500 4.500 9.500 4.500 17S9.500 30.500 17.500 30.500c6 0 10.500-3.500 12-8.500h-7c-1 1.700-2.700 2.700-5 2.700-3.700 0-6-2.200-6.200-5.700h18.700c.5-9-4.500-15.500-12.500-15.500zM11.600 14.300c.5-3 2.600-5 5.700-5s5.300 1.900 5.700 5z" fill="url(#ie)" stroke="#1a86c4" strokeWidth=".8" />
            <path d="M28.500 8.500C31 1.500 22 .500 13 8 4 15.500-.5 26 3.500 30c1.500 1.500 4 1 6.500-.5" fill="none" stroke="#f3c117" strokeWidth="2.600" />
          </svg>
        </Task>
        <Task w="w-[60px]" on active>
          <svg width="32" height="33" viewBox="0 0 32 33">
            <path d="M10.500 1h15l5.500 6v22h-20.500z" fill="#fdfefe" stroke="#7d8da0" />
            <path d="M25 1v6h6z" fill="#b9c9d9" stroke="#54667c" />
            <path d="M13 8h5M20 8h4M13 12h6M21 12h7M13 15h6M21 15h7" stroke="#a9b6c4" />
            <path d="M24 16h5v10h-5z" fill="#27a526" /><path d="M18 19.500h5V26h-5z" fill="#2186e0" />
            <path d="M1.500 7.500v19h18z" fill="#8b9fe0" stroke="#5569b5" /><path d="M5.500 17v6h6z" fill="#d7e6fb" stroke="#5569b5" />
            <path d="M1 28h26v4H1z" fill="#f4ce55" stroke="#b5862a" /><path d="M4 29v2M7 29v1M10 29v2M13 29v1M16 29v2M19 29v1M22 29v2" stroke="#6d4b12" />
          </svg>
        </Task>
        <Task w="w-[60px]" on>
          <svg width="33" height="33" viewBox="0 0 33 33">
            <path d="M1 2.500v10c0 2 9 2 9 0v-10z" fill="#e4a526" stroke="#9c6d14" strokeWidth=".7" /><path d="M2.500 4v9c1 .4 2 .4 3 .4V4z" fill="#fbe39a" />
            <ellipse cx="5.500" cy="2.600" rx="4.500" ry="1.800" fill="#fbe9ae" stroke="#a8781c" strokeWidth=".7" />
            <path d="M15 2h11v10M1.500 19v7h10" fill="none" stroke="#1d7a2c" strokeWidth="1.800" strokeDasharray="2 1.500" />
            <path d="M14 31 26 18" stroke="#a3661c" strokeWidth="3" /><path d="M20 15l5-2 7 6-2 3-4-3z" fill="#c9d2dc" stroke="#59656f" strokeWidth=".8" />
            <path d="M28 31 15 18" stroke="#6d7a88" strokeWidth="4" /><path d="M27.500 30.500 15 18" stroke="#e6ebef" strokeWidth="2.600" />
            <path d="M11 16l3 3 3-3-2-2 4 1 .5 4-4 3-4-1z" fill="#e3e8ec" stroke="#59656f" strokeWidth=".8" />
          </svg>
        </Task>
        <Task w="w-[60px]" on>
          <svg width="32" height="29" viewBox="0 0 32 29">
            <defs><linearGradient id="cp" x1="0" y1="0" x2="1" y2="1"><stop offset="0" stopColor="#6db4ea" /><stop offset="1" stopColor="#1c6dba" /></linearGradient></defs>
            <path d="M1 1h30v21H1z" fill="url(#cp)" stroke="#8bb9dd" />
            <circle cx="9" cy="9" r="4" fill="none" stroke="#dff0fc" strokeWidth="1.600" /><path d="M9 9V3.500A5.500 5.500 0 0 1 14.500 9z" fill="#f7a92e" />
            <path d="M17.500 5.500h10v3h-10zM17.500 11.500h10v3h-10z" fill="#cfe6f8" stroke="#fff" /><path d="M18 7h4M23 13h4" stroke="#1667b2" strokeWidth="2" />
            <circle cx="7" cy="17" r="1.300" fill="#f7a92e" /><circle cx="11" cy="17" r="1.300" fill="#f7a92e" />
            <ellipse cx="16.500" cy="24" rx="7" ry="4.500" fill="#e4e8ec" stroke="#8b97a3" /><path d="M11 22c3-3 8-3 11 0" stroke="#fff" fill="none" />
          </svg>
        </Task>
      </div>
      <div className="ml-auto flex items-center pr-[17px]">
        <svg width="7" height="4" viewBox="0 0 7 4"><path d="M0 4h7L3.500 0z" fill="#10202a" /></svg>
        <svg width="17" height="17" viewBox="0 0 17 17" className="ml-[13px]">
          <path d="M2 1v15" stroke="#1f3e4c" strokeWidth="2.600" /><path d="M3.500 2.500c3-1 4 1 6 1s3 0 4-.5v8c-4 1.500-6-1.500-10-.5z" fill="#fff" stroke="#1f3e4c" />
          <path d="M2 1v15" stroke="#fff" />
          <circle cx="11.500" cy="11.500" r="4.700" fill="#d9342a" stroke="#fff" strokeWidth=".7" /><path d="M9.500 9.500l4 4M13.500 9.500l-4 4" stroke="#fff" strokeWidth="1.500" />
        </svg>
        <svg width="17" height="16" viewBox="0 0 17 16" className="ml-[7px]">
          <path d="M5.500 3.500h10v7h-10zM7.500 14h7M11 11v3M1 1.500h4v4H1zM3 5.500v8h3" fill="none" stroke="#1f3e4c" strokeWidth="2.800" />
          <path d="M5.500 3.500h10v7h-10zM7.500 14h7M11 11v3" fill="#65c9ea" stroke="#fff" strokeWidth="1.300" />
          <path d="M1 1.500h4v4H1zM3 5.500v8h3" fill="#65c9ea" stroke="#fff" strokeWidth="1.300" />
        </svg>
        <svg width="17" height="16" viewBox="0 0 17 16" className="ml-[7px]">
          <path d="M1 5.500h3l4.500-4.500v13.500L4 10.500H1z" fill="#fff" stroke="#1f3e4c" />
          <circle cx="11" cy="11" r="4.700" fill="#d9342a" stroke="#fff" strokeWidth=".7" /><path d="M9 9l4 4M13 9l-4 4" stroke="#fff" strokeWidth="1.500" />
        </svg>
        <div className={`ml-[17px] flex w-[60px] flex-col items-center text-[11.500px] leading-[17px] tracking-[-0.1px] text-[#0b1b24] ${segoe}`}>
          <span className="whitespace-nowrap">7:45 PM</span>
          <span className="whitespace-nowrap">2016-12-16</span>
        </div>
      </div>
    </div>
  );
}

function Popup() {
  return (
    <div className={`absolute left-[1131px] top-[666px] h-[61px] w-[224px] bg-[#2d2d30] text-[#f1f1f1] ${segoe}`}>
      <div className="flex h-[22px] items-center pt-[3px] pl-[9px] pr-[7px] text-[12px]">
        <span className="whitespace-nowrap tracking-[-0.21px]">UIMap - Coded UI Test Builder</span>
        <b className="ml-auto">?</b>
        <svg width="10" height="10" viewBox="0 0 10 10" className="ml-[8px]"><path d="M1 1l8 8M9 1 1 9" stroke="#f1f1f1" strokeWidth="2" /></svg>
      </div>
      <div className="flex h-[32px] items-center pl-[22px]">
        <svg width="11" height="11" viewBox="0 0 11 11"><rect width="11" height="11" rx="1" fill="#f03a2c" /><circle cx="5.500" cy="5.500" r="3.200" fill="none" stroke="#2a1010" strokeWidth="1.200" /><circle cx="5.500" cy="5.500" r="1.300" fill="#2a1010" /></svg>
        <svg width="16" height="12" viewBox="0 0 16 12" className="ml-[21px]"><path d="M0 11V7h5V4h5V0h6v11z" fill="#555558" /></svg>
        <div className="ml-[12px] h-[32px] w-px bg-[#1f1f22]" />
        <svg width="14" height="14" viewBox="0 0 14 14" className="ml-[13px]"><circle cx="7" cy="7" r="5.800" fill="none" stroke="#c8c8c8" strokeWidth="2" /><circle cx="7" cy="7" r="2.600" fill="#c8c8c8" /></svg>
        <div className="ml-[11px] h-[32px] w-px bg-[#1f1f22]" />
        <svg width="18" height="17" viewBox="0 0 18 17" className="ml-[10px]">
          <path d="M8.500 1.500H17M9 6h7.500M6 11h10M4 15.500h8" stroke="#d4d4d4" strokeWidth="2.400" />
          <path d="M0 3.500h4V.500l4.500 4-4.500 4V5.500H0z" fill="#5fb0f5" stroke="#2d2d30" strokeWidth=".5" />
        </svg>
      </div>
    </div>
  );
}

export default function App() {
  return (
    <div className="relative flex h-[768px] w-[1366px] flex-col overflow-hidden">
      <div className="relative flex h-[728px] shrink-0 flex-col border-x border-[#6e9ad8] bg-[#abcffe]">
        <TitleBar />
        <Tabs />
        <Orb />
        <Ribbon />
        <div className="flex h-[551px] shrink-0 bg-[linear-gradient(180deg,#c1d8f8_0%,#a9cbe9_22%,#a6c3e8_50%,#98b0e2_72%,#8aa8dc_85%,#6b8ecb_100%)] px-[5px]">
          <div className="flex flex-1 bg-[#abcffe] pl-[3px] pt-[1px] pr-[3px]">
            <ReportData />
            <div className="ml-[3px] flex min-w-0 flex-1 flex-col pt-[2px]">
              <div className="flex h-[397px] shrink-0 flex-col border-l border-[#6f97d2]">
                <HRuler />
                <div className="flex">
                  <VRuler />
                  <Canvas />
                  <Scrollbar />
                </div>
              </div>
              <Groups />
            </div>
          </div>
        </div>
        <Status />
      </div>
      <Taskbar />
      <Popup />
    </div>
  );
}
